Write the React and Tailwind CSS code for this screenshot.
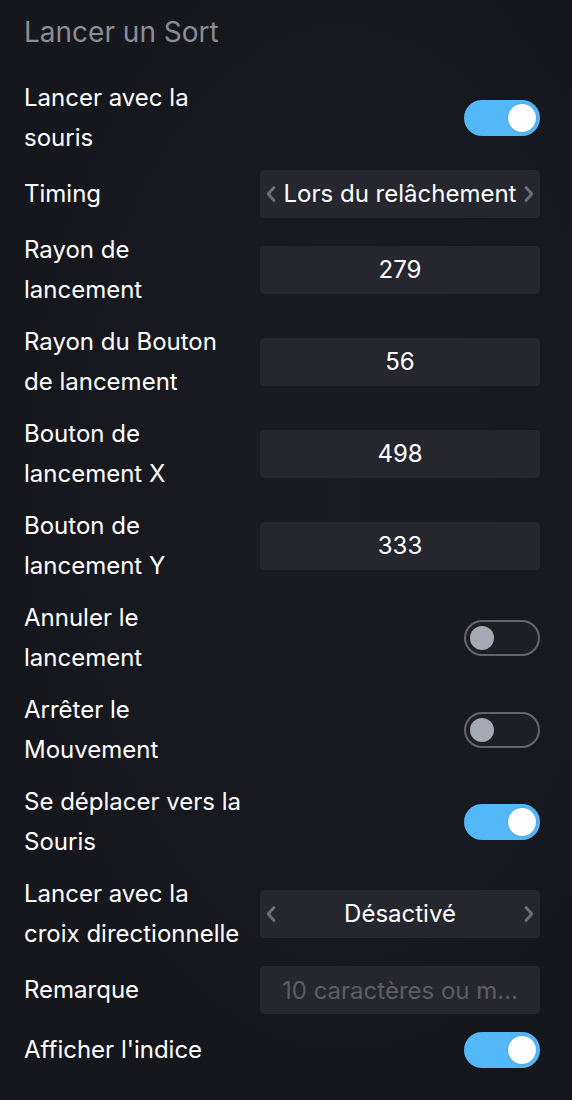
import React from "react";

function Toggle({ on }) {
  if (on) {
    return (
      <div className="w-[76px] h-[36px] rounded-full bg-[#52b8f7] flex items-center justify-end px-[4px]">
        <div className="w-[28px] h-[28px] rounded-full bg-white shadow-[0_0_2px_rgba(0,0,0,0.25)]" />
      </div>
    );
  }
  return (
    <div className="w-[76px] h-[36px] rounded-full border-2 border-[#64656c] bg-[#1e1f26] flex items-center px-[4px]">
      <div className="w-[24px] h-[24px] rounded-full bg-[#a6aab6]" />
    </div>
  );
}

function Chevron({ dir }) {
  return (
    <svg width="12" height="18" viewBox="0 0 12 18" fill="none">
      <path
        d={dir === "left" ? "M9 2.5 L3.2 9 L9 15.5" : "M3 2.5 L8.8 9 L3 15.5"}
        stroke="#6c6f78"
        strokeWidth="2.8"
        strokeLinecap="round"
        strokeLinejoin="round"
      />
    </svg>
  );
}

function Select({ value }) {
  return (
    <div className="w-[280px] h-[48px] rounded-[4px] bg-[#25262e] flex items-center justify-between px-[5px]">
      <Chevron dir="left" />
      <span className="text-[24px] leading-none text-white">{value}</span>
      <Chevron dir="right" />
    </div>
  );
}

function NumInput({ value }) {
  return (
    <div className="w-[280px] h-[48px] rounded-[4px] bg-[#25262e] flex items-center justify-center">
      <span className="text-[24px] leading-none text-white">{value}</span>
    </div>
  );
}

function Row({ label, children }) {
  return (
    <div className="flex items-center justify-between min-h-[48px]">
      <div className="text-[24px] leading-[40px] text-white">{label}</div>
      {children}
    </div>
  );
}

export default function App() {
  return (
    <div className="w-[572px] h-[1100px] bg-[radial-gradient(ellipse_at_60%_45%,#1c1d24_0%,#16171d_70%)] pl-6 pr-8 pt-3 font-['Inter',sans-serif] overflow-hidden">
      <div className="text-[28px] leading-[40px] text-[#8a8d95]">Lancer un Sort</div>
      <div className="mt-[26px] flex flex-col gap-3">
        <Row label={<>Lancer avec la<br />souris</>}>
          <Toggle on />
        </Row>
        <Row label="Timing">
          <Select value="Lors du relâchement" />
        </Row>
        <Row label={<>Rayon de<br />lancement</>}>
          <NumInput value="279" />
        </Row>
        <Row label={<>Rayon du Bouton<br />de lancement</>}>
          <NumInput value="56" />
        </Row>
        <Row label={<>Bouton de<br />lancement X</>}>
          <NumInput value="498" />
        </Row>
        <Row label={<>Bouton de<br />lancement Y</>}>
          <NumInput value="333" />
        </Row>
        <Row label={<>Annuler le<br />lancement</>}>
          <Toggle />
        </Row>
        <Row label={<>Arrêter le<br />Mouvement</>}>
          <Toggle />
        </Row>
        <Row label={<>Se déplacer vers la<br />Souris</>}>
          <Toggle on />
        </Row>
        <Row label={<>Lancer avec la<br />croix directionnelle</>}>
          <Select value="Désactivé" />
        </Row>
        <Row label="Remarque">
          <input
            className="w-[280px] h-[48px] rounded-[4px] bg-[#25262e] pl-[22px] pr-[8px] text-left text-[24px] text-white truncate outline-none placeholder:text-[#5c5e66]"
            placeholder="10 caractères ou moins"
          />
        </Row>
        <Row label="Afficher l'indice">
          <Toggle on />
        </Row>
      </div>
    </div>
  );
}
